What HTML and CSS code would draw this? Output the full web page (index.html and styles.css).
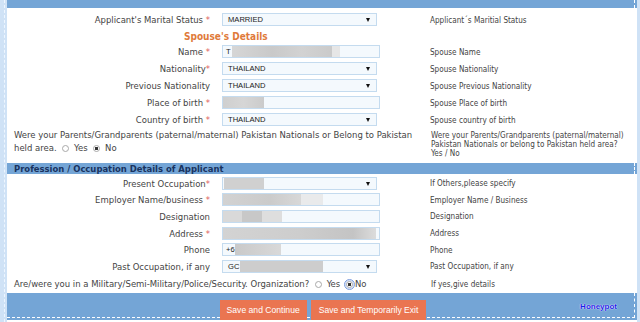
FILE: index.html
```html
<!DOCTYPE html>
<html lang="en">
<head>
    <meta charset="UTF-8">
    <meta name="viewport" content="width=device-width, initial-scale=1.0">
    <title>Applicant Details</title>
    <link rel="stylesheet" href="styles.css">
</head>
<body>
<div class="page">
    <div class="rail"></div>
    <form class="frame" id="applicantForm">
        <div class="band topbar"><div class="band-inner"></div></div>

        <div class="row">
            <label class="lbl">Applicant's Marital Status <span class="req">*</span></label>
            <div class="select">MARRIED</div>
            <div class="help">Applicant´s Maritial Status</div>
        </div>

        <div class="subhead">Spouse's Details</div>

        <div class="row">
            <label class="lbl">Name <span class="req">*</span></label>
            <div class="field">T<span class="blur b-name"></span><span class="blur b-name2"></span></div>
            <div class="help">Spouse Name</div>
        </div>
        <div class="row">
            <label class="lbl">Nationality<span class="req">*</span></label>
            <div class="select">THAILAND</div>
            <div class="help">Spouse Nationality</div>
        </div>
        <div class="row">
            <label class="lbl">Previous Nationality</label>
            <div class="select">THAILAND</div>
            <div class="help">Spouse Previous Nationality</div>
        </div>
        <div class="row">
            <label class="lbl">Place of birth <span class="req">*</span></label>
            <div class="field flush"><span class="blur b-place"></span></div>
            <div class="help">Spouse Place of birth</div>
        </div>
        <div class="row">
            <label class="lbl">Country of birth <span class="req">*</span></label>
            <div class="select">THAILAND</div>
            <div class="help">Spouse country of birth</div>
        </div>

        <div class="question multi">
            <div class="q-text">Were your Parents/Grandparents (paternal/maternal) Pakistan Nationals or Belong to Pakistan held area.
                <input type="radio" class="radio" name="parents"> Yes <input type="radio" class="radio" name="parents" checked> No</div>
            <div class="help q-help">Were your Parents/Grandparents (paternal/maternal)<br>Pakistan Nationals or belong to Pakistan held area?<br>Yes / No</div>
        </div>

        <div class="band section"><div class="band-inner">Profession / Occupation Details of Applicant</div></div>

        <div class="rows-tight">
            <div class="row">
                <label class="lbl">Present Occupation<span class="req">*</span></label>
                <div class="select flush"><span class="blur b-occ"></span></div>
                <div class="help">If Others,please specify</div>
            </div>
            <div class="row">
                <label class="lbl">Employer Name/business <span class="req">*</span></label>
                <div class="field flush"><span class="blur b-emp"></span><span class="blur b-emp2"></span></div>
                <div class="help">Employer Name / Business</div>
            </div>
            <div class="row">
                <label class="lbl">Designation</label>
                <div class="field flush"><span class="blur b-des1"></span><span class="blur b-des2"></span><span class="blur b-des3"></span></div>
                <div class="help">Designation</div>
            </div>
            <div class="row">
                <label class="lbl">Address <span class="req">*</span></label>
                <div class="field flush"><span class="blur b-addr"></span></div>
                <div class="help">Address</div>
            </div>
            <div class="row">
                <label class="lbl">Phone</label>
                <div class="field">+6<span class="blur b-phone"></span></div>
                <div class="help">Phone</div>
            </div>
            <div class="row">
                <label class="lbl">Past Occupation, if any</label>
                <div class="select">GC<span class="blur b-past"></span></div>
                <div class="help">Past Occupation, if any</div>
            </div>
        </div>

        <div class="question single">
            <div class="q-text">Are/were you in a Military/Semi-Military/Police/Security. Organization?
                <input type="radio" class="radio" name="military"> Yes <input type="radio" class="radio focus" name="military" checked>No</div>
            <div class="help">If yes,give details</div>
        </div>

        <div class="band footer">
            <div class="band-inner footer-inner">
                <div></div>
                <div class="actions">
                    <button type="button" class="btn">Save and Continue</button>
                    <button type="button" class="btn wide">Save and Temporarily Exit</button>
                </div>
                <div class="honeypot">Honeypot</div>
            </div>
        </div>
    </form>
</div>
</body>
</html>
```

FILE: styles.css
```css
body {
    margin: 0;
    background: #cfe2f6;
    font-family: "DejaVu Sans Condensed", "DejaVu Sans", sans-serif;
    font-stretch: condensed;
    font-size: 9.45px;
    color: #444;
}
.page {
    display: flex;
    height: 322px;
    overflow: hidden;
}
.rail {
    width: 4px;
    border-right: 1px dashed #eef6ff;
}
.frame {
    width: 630px;
    margin: 0 0 0 2px;
    background: #fff;
}
.band {
    background: #74a5d6;
    padding-right: 2px;
}
.band-inner {
    border-right: 1px dashed #fff;
    height: 100%;
}
.topbar {
    height: 8px;
    margin-bottom: 3px;
}
.row {
    display: grid;
    grid-template-columns: 215px 208px 1fr;
    align-items: center;
    height: 17px;
}
.rows-tight .row {
    height: 16.6px;
}
.lbl {
    text-align: right;
    padding-right: 12px;
    white-space: nowrap;
}
.req {
    color: #e0625d;
}
.help {
    font-size: 8.1px;
    color: #444;
    white-space: nowrap;
}
.field, .select {
    position: relative;
    box-sizing: border-box;
    height: 13px;
    border: 1px solid #c4dbef;
    background: #f4f9fd;
    font-family: "Liberation Sans", Arial, sans-serif;
    font-size: 7.6px;
    color: #222;
    line-height: 11px;
    padding-left: 3px;
    display: flex;
    align-items: stretch;
    white-space: nowrap;
}
.field {
    width: 158px;
}
.select {
    width: 155px;
    padding-left: 5px;
}
.select::after {
    content: "";
    position: absolute;
    right: 6px;
    top: 4px;
    border-left: 2px solid transparent;
    border-right: 2px solid transparent;
    border-top: 4px solid #111;
}
.flush {
    padding-left: 0;
}
.blur {
    display: block;
    background: #cfcfcf;
}
.b-name { width: 100px; margin-left: 1px; background: linear-gradient(90deg, #d6d6d6, #c9c9c9 40%, #d2d2d2 70%, #cacaca); }
.b-name2 { width: 8px; background: #e6e6e6; }
.b-place { width: 41px; background: linear-gradient(90deg, #cfcfcf, #d6d6d6 50%, #cbcbcb); }
.b-occ { width: 40px; margin-left: 1px; background: #d0d0d0; }
.b-emp { width: 78px; background: linear-gradient(90deg, #d2d2d2, #cbcbcb 60%, #d8d8d8); }
.b-emp2 { width: 22px; background: #e9eaeb; }
.b-des1 { width: 19px; background: #d9d9d9; }
.b-des2 { width: 20px; background: #c8c8c8; }
.b-des3 { width: 20px; background: #dedede; }
.b-addr { width: 153px; background: linear-gradient(90deg, #d3d3d3, #cdcdcd 50%, #c4c4c4 85%, #dcdcdc); }
.b-phone { width: 46px; background: linear-gradient(90deg, #c9c9c9, #d9d9d9); }
.b-past { width: 83px; margin-left: 1px; background: #cdcdcd; }
.subhead {
    box-sizing: border-box;
    height: 15px;
    padding: 2px 0 0 177px;
    line-height: 13px;
    color: #e07a3a;
    font-weight: bold;
    font-size: 10px;
}
.question {
    display: grid;
    grid-template-columns: 424px 1fr;
}
.question.multi {
    height: 33px;
    margin-top: 1px;
}
.q-text {
    padding: 0 10px 0 7px;
    line-height: 12.5px;
}
.q-help {
    line-height: 9.2px;
    padding-top: 2px;
}
.question.single {
    margin-top: 3px;
    align-items: center;
    height: 13px;
}
.question.single .q-text {
    white-space: nowrap;
}
.radio {
    appearance: none;
    box-sizing: border-box;
    width: 7px;
    height: 7px;
    margin: 0 2px 0 3px;
    border: 1px solid #a9a9a9;
    border-radius: 50%;
    background: #fff;
    vertical-align: -1px;
}
.radio:checked {
    background: radial-gradient(circle, #333 0 1.4px, #fff 1.9px);
}
.radio.focus {
    outline: 1px solid #7d9ede;
    outline-offset: 1px;
    box-shadow: 0 0 0 1px #cddcf6;
}
.section {
    height: 11px;
    margin-top: 1px;
    margin-bottom: 1px;
}
.section .band-inner {
    padding-left: 7px;
    line-height: 11px;
    font-weight: bold;
    color: #19335f;
    font-size: 9.4px;
}
.footer {
    height: 27px;
    margin-top: 2px;
}
.footer-inner {
    box-sizing: border-box;
    height: 25px;
    border-bottom: 1px dashed #fff;
    display: grid;
    grid-template-columns: 1fr auto 1fr;
}
.actions {
    display: flex;
    gap: 4px;
    padding-top: 7px;
    padding-left: 5px;
}
.btn {
    height: 20px;
    padding: 0 7px;
    border: 0;
    background: #ea7551;
    color: #fff;
    font-family: "Liberation Sans", Arial, sans-serif;
    font-size: 8.6px;
}
.btn.wide {
    padding: 0 8px;
}
.honeypot {
    justify-self: end;
    padding: 9px 17px 0 0;
    font-family: "Liberation Sans", Arial, sans-serif;
    font-size: 8px;
    font-weight: bold;
    color: #1d22e6;
    text-shadow: 0 0 1px #fff, 0 0 1px #fff;
}
```
